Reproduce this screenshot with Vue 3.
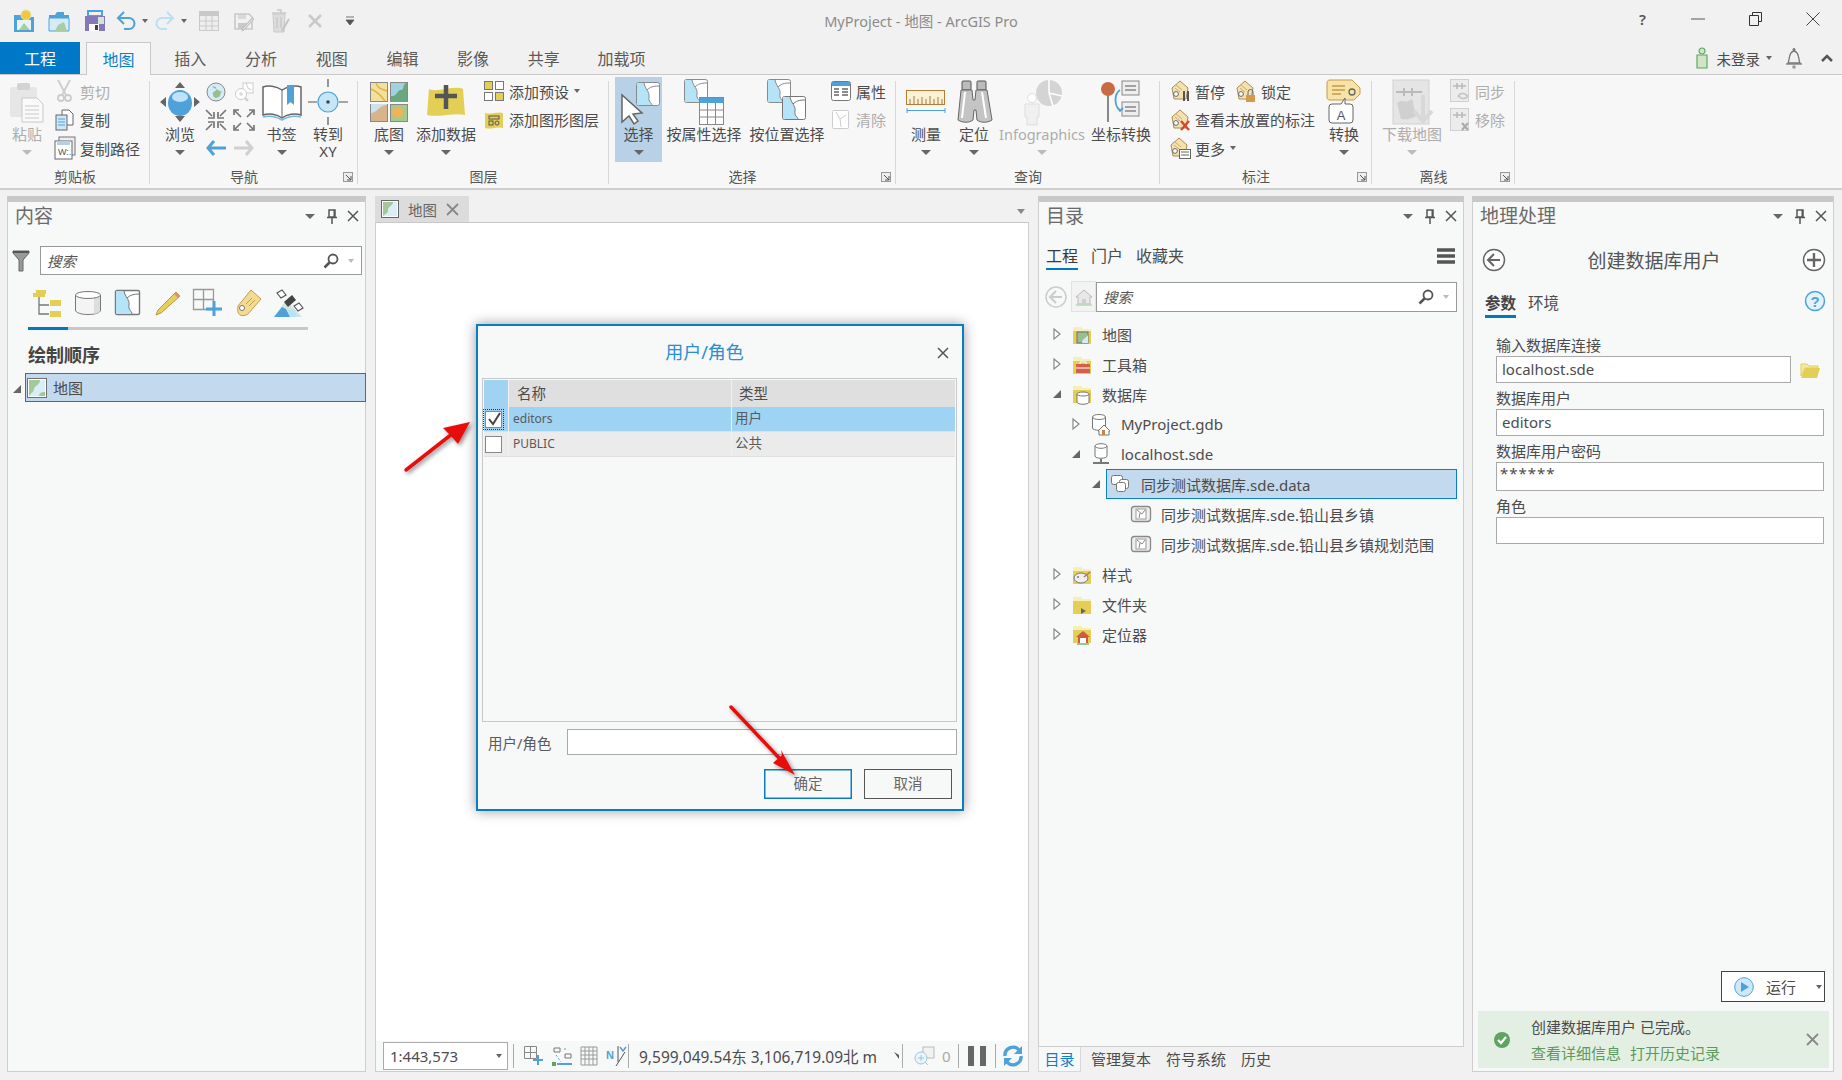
<script setup>
import { h } from 'vue'

const Y = '#e3cf55', B = '#4ea2d9', LB = '#b5e3f7', G = '#8a8a8a', D = '#c9c9c9'
const parcel = (c = G, f = LB) => `<rect x=".5" y=".5" width="23" height="23" rx="2" fill="#fff" stroke="${c}"/><path d="M1 1h7c1 6 6 9 5 14s3 6 3 8H2a1 1 0 0 1-1-1z" fill="${f}"/><path d="M8 1c1 6 6 9 5 14s3 6 3 8M11 8c3-3 6-4 12-4" fill="none" stroke="${c}"/>`
const folder = (inner) => `<path d="M1 3h7l2 2h9v15H1z" fill="${Y}"/><path d="M1 3h7l2 2h9v2H1z" fill="#f6efb8"/>${inner}`
const tagBase = (extra) => `<path d="M10 1l8 7-2 11H4L2 8z" fill="#f3e2b0" stroke="#a98d55"/><circle cx="6" cy="14" r="2.4" fill="#fff" stroke="#666"/><path d="M6 5l6 5M5 8l5 4" stroke="#c8ab6c"/>${extra}`
const disk = (c) => `<path d="M2 4h14l3 3v12H2z" fill="none" stroke="${c}" stroke-width="1.6"/><rect x="5" y="13" width="9" height="6" fill="${c}"/><rect x="5" y="4" width="8" height="5" fill="${c}" opacity=".6"/>`
const arrows4 = (c, out) => [[0,0,0],[12,0,90],[12,12,180],[0,12,270]].map(([x,y,r]) => `<g transform="translate(${x+4} ${y+4}) rotate(${r})"><path d="${out ? 'M3 3L-3 -3M-4 1v-5h5' : 'M-4 -4L2 2M4 -2v6h-6'}" fill="none" stroke="${c}" stroke-width="1.7"/></g>`).join('')

const I = {
  qNew: [24, 26, `<path d="M2 7h7l2 2h11v15H2z" fill="${B}"/><circle cx="14" cy="7" r="5" fill="#f0c83c" stroke="#e8e2a8"/><path d="M5 12h14v10H5z" fill="#e6f4fa"/><path d="M7 22l5-7 6 7z" fill="#a8cda0"/>`],
  qOpen: [24, 24, `<path d="M2 6h6l2-3h7v3h5v3H2z" fill="${B}"/><path d="M2 9h20v13H2z" fill="#d4ecf7" stroke="${B}"/><path d="M8 22l3-6 6-3 3 9z" fill="#a8cda0"/>`],
  qSave: [24, 24, `<path d="M5 2h14v5H5z" fill="none" stroke="${B}" stroke-width="2"/><path d="M2 7h20v15H2z" fill="#8578b8"/><rect x="6" y="15" width="10" height="7" fill="#fff"/><rect x="12" y="16" width="3" height="5" fill="#444"/><path d="M15 8h6v7h-6z" fill="#cfe6d0"/>`],
  qUndo: [20, 20, `<path d="M3 7h10a5.5 5.5 0 0 1 0 11H8" fill="none" stroke="${B}" stroke-width="2"/><path d="M8 1L2 7l6 6" fill="none" stroke="${B}" stroke-width="2"/>`],
  qRedo: [20, 20, `<path d="M17 7H7a5.5 5.5 0 0 0 0 11h5" fill="none" stroke="#bcdff2" stroke-width="2"/><path d="M12 1l6 6-6 6" fill="none" stroke="#bcdff2" stroke-width="2"/>`],
  qTable: [20, 20, `<rect x=".5" y=".5" width="19" height="19" fill="#eee" stroke="${D}"/><rect x="1" y="1" width="18" height="4" fill="${D}"/><path d="M7 5v14M13 5v14M1 10h18M1 15h18" stroke="${D}"/>`],
  qEdit: [22, 22, `${disk(D)}<path d="M21 9L11 20l-2 1 1-3 9-10z" fill="#ddd" stroke="#bbb"/>`],
  qDel: [20, 24, `<path d="M3 5h12l-1 18H4z" fill="#ddd" stroke="${D}"/><path d="M2 4h14M7 1h4v3M7 8v11M11 8v11" fill="none" stroke="${D}" stroke-width="1.5"/><path d="M19 10L12 22" stroke="#c4c4c4" stroke-width="2"/>`],
  qX: [14, 14, `<path d="M1 1l12 12M13 1L1 13" stroke="${D}" stroke-width="2.6"/>`],
  qMore: [10, 10, `<path d="M1 1h8M1 4h8l-4 5z" fill="#555" stroke="#555" stroke-width=".8"/>`],
  paste: [36, 40, `<rect x="1" y="5" width="27" height="30" rx="2" fill="#e6e6e6"/><rect x="8" y="1" width="13" height="7" rx="2" fill="#d3d3d3"/><path d="M13 16h15l6 6v18H13z" fill="#fafafa" stroke="${D}"/><path d="M16 24h14M16 28h14M16 32h14M16 36h14" stroke="${D}"/>`],
  cut: [20, 24, `<path d="M3 1l8 15M15 1L7 16" stroke="#ccc" stroke-width="1.8"/><circle cx="6" cy="19" r="3" fill="none" stroke="#ccc" stroke-width="1.8"/><circle cx="13" cy="19" r="3" fill="none" stroke="#ccc" stroke-width="1.8"/>`],
  copy: [20, 22, `<path d="M7 1h7l4 4v11H7z" fill="#fff" stroke="#666"/><rect x="1" y="6" width="11" height="15" fill="#cfe6f5" stroke="#666"/><path d="M3 10h7M3 13h7M3 16h7" stroke="${B}"/>`],
  copyPath: [22, 24, `<rect x="5" y="1" width="16" height="18" fill="#eee" stroke="#777"/><rect x="1" y="5" width="17" height="18" fill="#fff" stroke="#666"/><rect x="3" y="5" width="13" height="4" fill="#b5cfe4"/><text x="4" y="19" font-size="9" fill="#555" font-family="Liberation Sans">W:.</text>`],
  nav: [40, 40, `<path d="M20 0l5 6H15zM20 40l-5-6h10zM0 20l6-5v10zM40 20l-6 5V15z" fill="#666"/><ellipse cx="20" cy="21" rx="12" ry="13" fill="${B}"/><ellipse cx="20" cy="15" rx="8" ry="5" fill="#bfe2f6"/>`],
  globe: [20, 20, `<circle cx="10" cy="10" r="9" fill="#d4ecf7" stroke="#888"/><path d="M6 5c3-2 5 1 4 3s-4 1-3 5 4 3 6 2 1-5 3-5" fill="#98c08f"/>`],
  zoomData: [20, 20, `<rect x="9" y="1" width="10" height="10" fill="#fff" stroke="#ccc"/><path d="M12 1l2 5 3 2" fill="none" stroke="#ccc"/><circle cx="7" cy="12" r="5.5" fill="#fff" stroke="#ccc"/><path d="M5 12h4M7 10v4" stroke="#ccc"/><path d="M11 16l3 3" stroke="#ccc" stroke-width="2"/>`],
  zoomIn: [20, 20, arrows4('#777', false)],
  zoomOut: [20, 20, arrows4('#777', true)],
  back: [20, 16, `<path d="M8 1L2 8l6 7M2 8h18" fill="none" stroke="${B}" stroke-width="3"/>`],
  fwd: [20, 16, `<path d="M12 1l6 7-6 7M18 8H0" fill="none" stroke="#d0d0d0" stroke-width="3"/>`],
  book: [40, 36, `<path d="M20 6C14 2 6 1 1 3v28c6-2 14-1 19 3 5-4 13-5 19-3V3c-5-2-13-1-19 3z" fill="#fff" stroke="#666" stroke-width="1.5"/><path d="M20 6v28" stroke="#666"/><path d="M25 1h7v20l-3.5-3-3.5 3z" fill="${B}"/><path d="M1 33c7-2 14 0 19 3 5-3 12-5 19-3" fill="none" stroke="#76b7e4" stroke-width="1.5"/>`],
  goto: [40, 46, `<circle cx="20" cy="23" r="10" fill="#c5e6f7" stroke="${B}" stroke-width="1.2"/><circle cx="20" cy="23" r="1.8" fill="#444"/><path d="M20 0v8M20 38v8M0 23h9M31 23h9" stroke="#555" stroke-width="1.2"/>`],
  basemap: [38, 40, `<rect x=".5" y=".5" width="17" height="19" fill="#f3dfa0" stroke="#888"/><path d="M1 7c5 2 9 5 14 12M6 1c2 6 6 6 11 8" fill="none" stroke="#e3b23c" stroke-width="1.4"/><rect x="20.5" y=".5" width="17" height="19" fill="#9fd2dc" stroke="#888"/><path d="M21 14c6 1 6-6 10-6s1-7 6-7v19H21z" fill="#6aa67e"/><rect x=".5" y="22.5" width="17" height="17" fill="#d9b48b" stroke="#888"/><path d="M1 38V31c6 0 8-8 16-8v-1H1z" fill="#c9e4ef"/><rect x="20.5" y="22.5" width="17" height="17" fill="#a7c98c" stroke="#888"/><path d="M25 26c4-2 8 0 8 4s-4 7-8 5-4-7 0-9z" fill="#efb45a"/>`],
  addData: [38, 36, `<path d="M2 5c8 4 25-4 34 0l2 26c-10-3-26 3-38 0z" fill="${Y}"/><path d="M19 1v24M8 12h22" stroke="#555" stroke-width="4.5"/>`],
  preset: [20, 20, `<rect x=".5" y=".5" width="8" height="8" fill="${Y}" stroke="#777"/><rect x="11.5" y=".5" width="8" height="8" fill="#fff" stroke="#777"/><rect x=".5" y="11.5" width="8" height="8" fill="#fff" stroke="#777"/><rect x="11.5" y="11.5" width="8" height="8" fill="${Y}" stroke="#777"/>`],
  graphics: [20, 18, `<path d="M1 2c6 2 12-2 18 0v15c-6-2-12 2-18 0z" fill="${Y}"/><rect x="5" y="5" width="10" height="3" fill="none" stroke="#555"/><rect x="5" y="10" width="4" height="4" fill="none" stroke="#555"/><circle cx="13" cy="12" r="2" fill="none" stroke="#555"/>`],
  select: [44, 46, `<g transform="translate(19 3)">${parcel()}</g><path d="M5 16v27l7-6 5 8 4-3-5-7 9-1z" fill="#fff" stroke="#666" stroke-width="1.5"/>`],
  selAttr: [40, 46, `${parcel()}<rect x="15.5" y="18.5" width="24" height="27" fill="#fff" stroke="#888"/><rect x="16" y="19" width="23" height="5" fill="${B}"/><path d="M16 31h23M16 38h23M23.500 24v21M31.500 24v21" stroke="#888"/>`],
  selLoc: [40, 46, `${parcel()}<g transform="translate(15 17)">${parcel('#777', LB)}</g>`],
  attrs: [20, 20, `<rect x=".5" y=".5" width="19" height="19" rx="2" fill="#fff" stroke="#777"/><rect x="1" y="1" width="18" height="4" fill="${B}"/><path d="M3 8h5M11 8h6M3 11h5M11 11h6M3 14h5M11 14h6" stroke="#666" stroke-width="1.6"/>`],
  clear: [18, 20, `<rect x=".5" y=".5" width="16" height="18" rx="1" fill="#fff" stroke="#ccc"/><path d="M4 2l4 7 1 8M8 9l6-4" fill="none" stroke="#ccc"/>`],
  ruler: [40, 24, `<rect x=".5" y=".5" width="38" height="14" fill="#fbf2d6" stroke="#b27d37"/><path d="M4 14V9M8 14V6M12 14V9M16 14V7M20 14V9M24 14V6M28 14V9M32 14V7M36 14V9" stroke="#a07a45"/><path d="M1 18v5M39 18v5M1 20.500h38" stroke="${B}"/>`],
  binoc: [36, 44, `<rect x="6" y="1" width="9" height="9" rx="1" fill="#bbb" stroke="#555"/><rect x="21" y="1" width="9" height="9" rx="1" fill="#bbb" stroke="#555"/><path d="M5 10h11l1 10h2l1-10h11l5 30c-5 3-11 3-15 0l-1-10h-2l-1 10c-4 3-10 3-15 0z" fill="#c4c4c4" stroke="#666"/><path d="M9 12l-3 26M26 12l4 26" stroke="#fff" stroke-width="2"/>`],
  info: [42, 46, `<circle cx="28" cy="14" r="13" fill="#d4d4d4"/><path d="M28 14L28 1M28 14l13 3M28 14l4 13" stroke="#fff" stroke-width="1.5"/><circle cx="11" cy="19" r="4.5" fill="#fff" stroke="#ddd"/><path d="M4 25h14v13h-2v8H6v-8H4z" fill="#f0f0f0" stroke="#ddd"/>`],
  coord: [40, 44, `<path d="M7 10v32" stroke="#888" stroke-width="2"/><circle cx="7" cy="9" r="7" fill="#c96a45"/><rect x="21" y="1" width="17" height="14" fill="#eee" stroke="#888"/><path d="M24 6h11M24 10h11" stroke="#888" stroke-width="1.5"/><rect x="21" y="22" width="17" height="14" fill="#eee" stroke="#888"/><path d="M24 27h11M24 31h11" stroke="#888" stroke-width="1.5"/><path d="M19 10c-6 4-6 16 0 20M16 27l3 4 3-3" fill="none" stroke="${B}" stroke-width="1.8"/>`],
  tagPause: [20, 22, tagBase(`<path d="M14 11v10M18 11v10" stroke="#555" stroke-width="2"/>`)],
  tagX: [20, 22, tagBase(`<path d="M11 12l8 9M19 12l-8 9" stroke="#d24a2e" stroke-width="2.4"/>`)],
  tagMore: [22, 22, tagBase(`<rect x="10.500" y="12.500" width="11" height="9" fill="#fff" stroke="#666"/><path d="M12 15h8M12 18h8" stroke="#666"/>`)],
  tagLock: [22, 22, tagBase(`<rect x="11" y="15" width="9" height="7" fill="#d39b4a"/><path d="M13 15v-3a2.500 2.500 0 0 1 5 0v3" fill="none" stroke="#666"/>`)],
  convert: [36, 46, `<path d="M4 1h22l8 8v6l-6 6H4c-2 0-3-1-3-3V4c0-2 1-3 3-3z" fill="#f7e3a6" stroke="#c59b4e"/><path d="M6 7h13M6 11h13M6 15h9" stroke="#c59b4e" stroke-width="1.4"/><circle cx="26" cy="13" r="3" fill="none" stroke="#666" stroke-width="1.3"/><path d="M6 25h9l4-6v6h5a3 3 0 0 1 3 3v13a3 3 0 0 1-3 3H6a3 3 0 0 1-3-3V28a3 3 0 0 1 3-3z" fill="#fff" stroke="#666"/><text x="15" y="41" font-size="13" text-anchor="middle" fill="#555" font-family="Liberation Sans">A</text>`],
  download: [40, 46, `<rect x="1" y="1" width="36" height="44" fill="#e5e5e5" stroke="#d2d2d2"/><path d="M5 24c6-5 8 1 13-3s2 11 7 13-9 8-16 6z" fill="#d0d0d0"/><path d="M4 13h26M12 9v8M20 9v8" stroke="#bbb" stroke-width="2"/><path d="M31 16v26M22 32l9 10 9-10" fill="none" stroke="#d8d8d8" stroke-width="4"/>`],
  sync: [20, 24, `<rect x=".5" y=".5" width="18" height="22" fill="#ececec" stroke="#d0d0d0"/><path d="M3 7h13M7 4v6M12 4v6" stroke="#bbb" stroke-width="1.6"/><path d="M8 18c1-4 7-5 9-1M18 16c-1 4-7 5-9 1" fill="none" stroke="#c4c4c4" stroke-width="1.6"/>`],
  remove: [20, 24, `<rect x=".5" y=".5" width="18" height="22" fill="#ececec" stroke="#d0d0d0"/><path d="M3 7h13M7 4v6M12 4v6" stroke="#bbb" stroke-width="1.6"/><path d="M12 15l6 7M18 15l-6 7" stroke="#aaa" stroke-width="2"/>`],
  user: [14, 22, `<circle cx="7" cy="4" r="3" fill="#cfe5c6" stroke="#5fa862" stroke-width="1.2"/><path d="M2 8h10v13H2z" fill="#cfe5c6" stroke="#5fa862" stroke-width="1.2"/>`],
  bell: [18, 22, `<path d="M3 16c2-3 0-11 6-12 6 1 4 9 6 12z" fill="none" stroke="#777" stroke-width="1.3"/><path d="M1 17h16" stroke="#777" stroke-width="1.3"/><circle cx="9" cy="2.500" r="1.500" fill="#777"/><circle cx="9" cy="20" r="1.800" fill="#999"/>`],
  mapIc: [20, 20, `<rect x=".5" y=".5" width="19" height="19" fill="#fff" stroke="#6e6e6e"/><rect x="2" y="2" width="16" height="16" fill="#d9eef7"/><path d="M2 2h11c0 5-5 5-6 9s-2 3-5 7z" fill="#a4c89a"/><path d="M12 18c0-3 2-4 6-4v4z" fill="#a4c89a"/>`],
  funnel: [18, 22, `<path d="M1 1h16v2l-6 7v11H7V10L1 3z" fill="#999" stroke="#666"/><path d="M1 2h16" stroke="#555" stroke-width="2"/>`],
  mag: [16, 16, `<circle cx="10" cy="6" r="4.500" fill="none" stroke="#555" stroke-width="1.8"/><path d="M6.500 9.500L1.500 14.500" stroke="#555" stroke-width="2.6"/>`],
  tDraw: [30, 28, `<rect x="3" y="1" width="10" height="4" fill="${Y}"/><rect x="0" y="4" width="12" height="4" fill="${Y}"/><path d="M6 8v17h10M6 16h10" fill="none" stroke="#777" stroke-width="1.3"/><rect x="17" y="11" width="11" height="6" fill="${Y}"/><rect x="17" y="22" width="11" height="6" fill="${Y}"/>`],
  tDb: [28, 26, `<path d="M1.500 5v15c0 6 25 6 25 0V5" fill="#f4f4f4" stroke="#777"/><path d="M20 8v16c4-1 6-2 6-4V6z" fill="#ddd"/><ellipse cx="14" cy="5" rx="12.500" ry="3.500" fill="#fff" stroke="#777"/>`],
  tParcel: [26, 26, `<rect x=".5" y=".5" width="24" height="24" rx="1.500" fill="#fff" stroke="#777" stroke-width="1.4"/><path d="M1 1h8c1 6 6 9 5 14s3 6 3 9H2a1 1 0 0 1-1-1z" fill="${LB}"/><path d="M9 1c1 6 6 9 5 14s3 6 3 9M12 8c3-3 7-4 12-4" fill="none" stroke="#777"/>`],
  tPencil: [26, 26, `<path d="M21 2l4 4L6 23l-5 2 2-5z" fill="#e8cf5a" stroke="#b89a3a"/><path d="M21 2l4 4-2 2-4-4z" fill="#dc8f7c"/>`],
  tGrid: [30, 28, `<path d="M.5 .5h20v20H.5zM10.500 1v20M1 10.500h20" fill="none" stroke="#999" stroke-width="1.300"/><path d="M21 12v15M13 20h16" stroke="${B}" stroke-width="3"/>`],
  tTag: [28, 28, `<path d="M4 17L17 1l10 9-13 15c-3 2-9 3-10-2s0-4 0-6z" fill="#f3dc92" stroke="#c39c4f"/><circle cx="8" cy="19" r="2.500" fill="#fff" stroke="#777"/><path d="M12 15l6-6M15 17l6-6" stroke="#c39c4f"/>`],
  tSat: [30, 30, `<path d="M1 29l12-17 16 17z" fill="#cfe7dc"/><path d="M1 29l8-10 4 2 4 8z" fill="${B}"/><path d="M14 22l7-1 3 8H17z" fill="${LB}"/><path d="M4 5l5-3 4 5-5 3zM21 18l5-3 4 5-5 3z" fill="#fff" stroke="#555" stroke-width="1.200"/><path d="M11 14l8-7 4 5-8 7z" fill="#444"/>`],
  fMap: [20, 20, folder(`<rect x="5" y="8" width="11" height="11" fill="#98be92" stroke="#6e6e6e"/><path d="M10 19c0-4 3-4 6-8v8z" fill="#d2ebf6"/>`)],
  fTool: [20, 20, folder(`<rect x="4" y="10" width="14" height="9" fill="#d4604a"/><path d="M8 10V8h6v2M4 14h14" fill="none" stroke="#fff"/>`)],
  fDb: [20, 22, folder(`<path d="M5 11v8c0 3 12 3 12 0v-8" fill="#fff" stroke="#777"/><ellipse cx="11" cy="11" rx="6" ry="2" fill="#fff" stroke="#777"/>`)],
  fStyle: [20, 20, folder(`<ellipse cx="9" cy="14" rx="7" ry="5" fill="#eee" stroke="#777"/><circle cx="6" cy="13" r="1" fill="#777"/><path d="M12 13l6-5" stroke="#a77" stroke-width="1.500"/>`)],
  fPlain: [20, 20, folder(`<path d="M9 14v6l5-3z" fill="#666"/>`)],
  fLoc: [20, 22, folder(`<path d="M11 8l7 6h-2v6H6v-6H4z" fill="#d05a44"/><rect x="8" y="15" width="6" height="5" fill="#fff"/><path d="M5 21h12" stroke="#79b57a" stroke-width="1.500"/>`)],
  gdb: [20, 22, `<path d="M1.500 4v11c0 3 13 3 13 0V4" fill="#fff" stroke="#777"/><ellipse cx="8" cy="4" rx="6.500" ry="2.500" fill="#fff" stroke="#777"/><path d="M13 12l6 6h-1v4H8v-4H7z" fill="#fff" stroke="#777"/><rect x="11" y="17" width="3" height="5" fill="#c88545"/>`],
  sde: [18, 22, `<path d="M3 3v10c0 3 12 3 12 0V3" fill="#fff" stroke="#777"/><ellipse cx="9" cy="3" rx="6" ry="2.300" fill="#fff" stroke="#777"/><path d="M9 16v3M1 20h16" stroke="#777" stroke-width="2"/>`],
  dataset: [20, 18, `<rect x=".5" y=".5" width="11" height="9" rx="2" fill="#fff" stroke="#777"/><rect x="8.500" y="4.500" width="9" height="9" rx="2" fill="#fff" stroke="#777"/><rect x="5.500" y="7.500" width="9" height="9" rx="2" fill="#fff" stroke="#777"/>`],
  fc: [20, 16, `<rect x=".5" y=".5" width="19" height="15" rx="3" fill="#eee" stroke="#888" stroke-width="1.300"/><rect x="5" y="3" width="10" height="10" fill="#fff" stroke="#999"/><path d="M6 4l5 4 3-4M9 7l-1 5" fill="none" stroke="#888"/>`],
  home: [18, 18, `<path d="M9 2l8 7h-2v7H3V9H1z" fill="#e8e8e8" stroke="#bbb"/><rect x="7" y="11" width="4" height="5" fill="#cfcfcf"/><path d="M1 17h16" stroke="#b7d7b0" stroke-width="1.500"/>`],
  menu: [18, 16, `<path d="M0 2h18M0 8h18M0 14h18" stroke="#555" stroke-width="3.500"/>`],
  cBack: [22, 22, `<circle cx="11" cy="11" r="10" fill="none" stroke="#ccc" stroke-width="1.500"/><path d="M11 5l-6 6 6 6M5 11h12" fill="none" stroke="#ccc" stroke-width="2"/>`],
  gBack: [24, 24, `<circle cx="12" cy="12" r="10.500" fill="#fff" stroke="#666" stroke-width="1.500"/><path d="M12 6l-6 6 6 6M6 12h12" fill="none" stroke="#666" stroke-width="2"/>`],
  gPlus: [24, 24, `<circle cx="12" cy="12" r="10.500" fill="#fff" stroke="#666" stroke-width="1.500"/><path d="M12 5v14M5 12h14" stroke="#666" stroke-width="2.400"/>`],
  help: [22, 22, `<circle cx="11" cy="11" r="9.500" fill="#e4f3fb" stroke="${B}" stroke-width="1.500"/><text x="11" y="16.500" text-anchor="middle" font-size="15" font-weight="700" fill="${B}" font-family="Liberation Sans">?</text>`],
  gFolder: [20, 16, `<path d="M1 2h6l2 2h9v2H5L1 14z" fill="#f3e9a8" stroke="${Y}"/><path d="M5 6h15l-3 10H1z" fill="${Y}"/>`],
  play: [20, 20, `<circle cx="10" cy="10" r="9.300" fill="#cfe8f7" stroke="${B}"/><path d="M7 5l8 5-8 5z" fill="${B}"/>`],
  ok: [16, 16, `<circle cx="8" cy="8" r="8" fill="#5fa362"/><path d="M4 8l3 3 5-6" fill="none" stroke="#fff" stroke-width="2.200"/>`],
  x12: [12, 12, `<path d="M1 1l10 10M11 1L1 11" stroke="#555" stroke-width="1.500"/>`],
  x12g: [13, 13, `<path d="M1 1l11 11M12 1L1 12" stroke="#888" stroke-width="1.800"/>`],
  pin: [12, 15, `<path d="M3 1h6v7H3zM1 8.500h10M6 9v6" fill="none" stroke="#555" stroke-width="1.500"/><path d="M7.500 1h1.500v7H7.500z" fill="#555"/>`],
  launcher: [10, 10, `<rect x=".5" y=".5" width="9" height="9" fill="#eee" stroke="#999"/><path d="M3 3l5 5M8 4v4H4" fill="none" stroke="#555"/>`],
  sGrid: [20, 20, `<path d="M.5 .5h12v12H.5zM6.500 1v12M1 6.500h12" fill="none" stroke="#888"/><path d="M14 9v10M9 14h10" stroke="${B}" stroke-width="2"/>`],
  sSnap: [20, 20, `<path d="M2 2h6v4H2zM13 8h6v4h-6z" fill="none" stroke="#777"/><path d="M4 9l5 7M13 2v4" stroke="${B}" stroke-dasharray="2 2"/><rect x="0" y="16" width="4" height="4" fill="#5fa362"/><path d="M5 18h15" stroke="${B}" stroke-width="2"/>`],
  sTable: [18, 20, `<path d="M1 1h16v18H1zM1 5h16M1 9h16M1 13h16M5 1v18M9 1v18M13 1v18" fill="none" stroke="#999"/>`],
  sNorth: [22, 20, `<text x="0" y="13" font-size="11" font-weight="700" fill="${B}" font-family="Liberation Sans">N</text><path d="M10 20L19 6M12 0v16" fill="none" stroke="#555"/><path d="M14 1l3 4 3-4" fill="none" stroke="${B}" stroke-width="1.500"/>`],
  sZoom: [22, 20, `<rect x="10" y="1" width="11" height="11" fill="#f2f2f2" stroke="#bbb"/><circle cx="8" cy="12" r="6" fill="#e9f5fb" stroke="#9cc6de"/><path d="M5 12h6M8 9v6M12 16l3 3" stroke="#9cc6de"/>`],
  refresh: [20, 22, `<path d="M2 11a8 8 0 0 1 14-6M18 11a8 8 0 0 1-14 6" fill="none" stroke="${B}" stroke-width="3.400"/><path d="M19 1v8h-8zM1 21v-8h8z" fill="${B}"/>`],
  chk: [14, 14, `<path d="M2 7l4 5 7-11" fill="none" stroke="#444" stroke-width="2"/>`],
  tabMap: [18, 18, `<rect x=".5" y=".5" width="17" height="17" fill="#fff" stroke="#666"/><rect x="2" y="2" width="14" height="14" fill="#d9eef7"/><path d="M2 2h10c0 4-5 4-5 8s-2 3-5 6z" fill="#a4c89a"/>`],
  expO: [8, 12, `<path d="M1 1l6 5-6 5z" fill="#fff" stroke="#888" stroke-width="1.200"/>`]
}

const Ico = (p) => {
  const [w, hh, m] = I[p.n]
  return h('svg', { class: 'ico', width: w, height: hh, viewBox: `0 0 ${w} ${hh}`, innerHTML: m })
}
Ico.props = ['n']

const qat = [
  { n: 'qNew', w: 35 }, { n: 'qOpen', w: 36 }, { n: 'qSave', w: 33 },
  { n: 'qUndo', w: 39, c: 1 }, { n: 'qRedo', w: 44, c: 1 }, { n: 'qTable', w: 34 },
  { n: 'qEdit', w: 37 }, { n: 'qDel', w: 38 }, { n: 'qX', w: 37 }, { n: 'qMore', w: 10 }
]
const tabs = ['插入', '分析', '视图', '编辑', '影像', '共享', '加载项']

const groups = [
  { label: '剪贴板', w: 150, pad: 0, items: [
    { w: 54, ic: 'paste', label: '粘贴', dis: 1, caret: 1 },
    { w: 96, rows: [[{ ic: 'cut', label: '剪切', dis: 1 }], [{ ic: 'copy', label: '复制' }], [{ ic: 'copyPath', label: '复制路径' }]] }
  ] },
  { label: '导航', w: 208, pad: 8, launch: 1, items: [
    { w: 44, ic: 'nav', label: '浏览', caret: 1 },
    { w: 57, grid: 1 },
    { w: 45, ic: 'book', label: '书签', caret: 1 },
    { w: 48, ic: 'goto', label: '转到', sub: 'XY' }
  ] },
  { label: '图层', w: 251, pad: 6, items: [
    { w: 50, ic: 'basemap', label: '底图', caret: 1 },
    { w: 64, ic: 'addData', label: '添加数据', caret: 1 },
    { w: 125, ml: 5, rows: [[{ ic: 'preset', label: '添加预设', caret: 1 }], [{ ic: 'graphics', label: '添加图形图层' }]] }
  ] },
  { label: '选择', w: 287, pad: 6, launch: 1, items: [
    { w: 47, ic: 'select', label: '选择', caret: 1, on: 1 },
    { w: 84, ic: 'selAttr', label: '按属性选择' },
    { w: 82, ic: 'selLoc', label: '按位置选择' },
    { w: 60, ml: 2, rows: [[{ ic: 'attrs', label: '属性' }], [{ ic: 'clear', label: '清除', dis: 1 }]] }
  ] },
  { label: '查询', w: 264, pad: 6, items: [
    { w: 48, ic: 'ruler', label: '测量', caret: 1 },
    { w: 48, ic: 'binoc', label: '定位', caret: 1 },
    { w: 88, ic: 'info', label: 'Infographics', dis: 1, caret: 1, tiny: 1 },
    { w: 70, ic: 'coord', label: '坐标转换' }
  ] },
  { label: '标注', w: 212, pad: 9, launch: 1, items: [
    { w: 151, rows: [[{ ic: 'tagPause', label: '暂停', w: 66 }, { ic: 'tagLock', label: '锁定' }], [{ ic: 'tagX', label: '查看未放置的标注' }], [{ ic: 'tagMore', label: '更多', caret: 1 }]] },
    { w: 48, ic: 'convert', label: '转换', caret: 1 }
  ] },
  { label: '离线', w: 143, pad: 6, launch: 1, items: [
    { w: 68, ic: 'download', label: '下载地图', dis: 1, caret: 1 },
    { w: 60, ml: 3, rows: [[{ ic: 'sync', label: '同步', dis: 1 }], [{ ic: 'remove', label: '移除', dis: 1 }]] }
  ] }
]
const leftTabs = ['tDraw', 'tDb', 'tParcel', 'tPencil', 'tGrid', 'tTag', 'tSat']
const tree = [
  { pad: 11, exp: 'o', ic: 'fMap', t: '地图' },
  { pad: 11, exp: 'o', ic: 'fTool', t: '工具箱' },
  { pad: 11, exp: 'x', ic: 'fDb', t: '数据库' },
  { pad: 30, exp: 'o', ic: 'gdb', t: 'MyProject.gdb' },
  { pad: 30, exp: 'x', ic: 'sde', t: 'localhost.sde' },
  { pad: 50, exp: 'x', ic: 'dataset', t: '同步测试数据库.sde.data', sel: 1 },
  { pad: 70, exp: '', ic: 'fc', t: '同步测试数据库.sde.铅山县乡镇' },
  { pad: 70, exp: '', ic: 'fc', t: '同步测试数据库.sde.铅山县乡镇规划范围' },
  { pad: 11, exp: 'o', ic: 'fStyle', t: '样式' },
  { pad: 11, exp: 'o', ic: 'fPlain', t: '文件夹' },
  { pad: 11, exp: 'o', ic: 'fLoc', t: '定位器' }
]
const fields = [
  { l: '输入数据库连接', v: 'localhost.sde', folder: 1, top: 6, hh: 27 },
  { l: '数据库用户', v: 'editors', top: 5, hh: 27 },
  { l: '数据库用户密码', v: '******', pw: 1, top: 5, hh: 29 },
  { l: '角色', v: '', top: 5, hh: 27 }
]
</script>

<template>
  <div class="app">
    <header class="titlebar">
      <div class="qat">
        <div v-for="q in qat" :key="q.n" class="qitem" :style="{ width: q.w + 'px' }">
          <Ico :n="q.n" /><i v-if="q.c" class="caret qcaret"></i>
        </div>
      </div>
      <div class="title">MyProject - 地图 - ArcGIS Pro</div>
      <div class="winbtns">
        <span class="wq">?</span>
        <span class="wbtn"><svg width="14" height="2"><path d="M0 1h14" stroke="#555" /></svg></span>
        <span class="wbtn"><svg width="13" height="14"><path d="M3.500 3V.5h9v9H10M.5 3.500h9v10h-9z" fill="none" stroke="#333" /></svg></span>
        <span class="wbtn"><svg width="14" height="14"><path d="M.5 .5l13 13M13.500 .5l-13 13" stroke="#444" /></svg></span>
      </div>
    </header>

    <nav class="tabbar">
      <div class="tab-file">工程</div>
      <div class="tab-on">地图</div>
      <div v-for="t in tabs" :key="t" class="tab">{{ t }}</div>
      <div class="account">
        <Ico n="user" /><span class="acct">未登录</span><i class="caret small"></i>
        <span class="bell"><Ico n="bell" /></span>
        <svg class="chev" width="12" height="8"><path d="M1 7l5-5 5 5" fill="none" stroke="#555" stroke-width="2.500" /></svg>
      </div>
    </nav>

    <section class="ribbon">
      <div v-for="g in groups" :key="g.label" class="rgroup" :style="{ width: g.w + 'px' }">
        <div class="rbody" :style="{ paddingLeft: g.pad + 'px' }">
          <template v-for="(it, i) in g.items" :key="i">
            <div v-if="it.grid" class="navgrid" :style="{ width: it.w + 'px' }">
              <Ico n="globe" /><Ico n="zoomData" />
              <Ico n="zoomIn" /><Ico n="zoomOut" />
              <Ico n="back" /><Ico n="fwd" />
            </div>
            <div v-else-if="it.rows" class="smcol" :style="{ width: it.w + 'px', marginLeft: (it.ml || 0) + 'px' }">
              <div v-for="(r, j) in it.rows" :key="j" class="smrow">
                <div v-for="s in r" :key="s.label" class="sm" :class="{ dis: s.dis }" :style="{ width: s.w ? s.w + 'px' : 'auto' }">
                  <span class="smic"><Ico :n="s.ic" /></span><span>{{ s.label }}</span><i v-if="s.caret" class="caret small mlc"></i>
                </div>
              </div>
            </div>
            <div v-else class="lg" :class="{ dis: it.dis, on: it.on }" :style="{ width: it.w + 'px' }">
              <span class="lgic"><Ico :n="it.ic" /></span>
              <span class="lgtxt" :class="{ tiny: it.tiny }">{{ it.label }}</span>
              <span v-if="it.sub" class="lgsub">{{ it.sub }}</span>
              <span v-else-if="it.caret" class="lgcaret"><i class="caret" :class="{ light: it.dis }"></i></span>
            </div>
          </template>
        </div>
        <div class="rlabel" :class="{ haslaunch: g.launch }">{{ g.label }}</div>
        <span v-if="g.launch" class="launch"><Ico n="launcher" /></span>
      </div>
    </section>

    <main class="panes">
      <aside class="panel left">
        <div class="phead"><span class="ptitle">内容</span><i class="caret pc"></i><Ico n="pin" /><Ico n="x12" /></div>
        <div class="lsearch">
          <Ico n="funnel" />
          <div class="search"><span>搜索</span><Ico n="mag" /><i class="caret light small"></i></div>
        </div>
        <div class="ltabs"><span v-for="t in leftTabs" :key="t"><Ico :n="t" /></span></div>
        <div class="lbar"><i></i></div>
        <h3 class="lhead">绘制顺序</h3>
        <div class="lrow">
          <i class="tri-x"></i>
          <div class="lsel"><Ico n="mapIc" /><span>地图</span></div>
        </div>
      </aside>

      <section class="mapcol">
        <div class="mapstrip">
          <div class="maptab"><Ico n="tabMap" /><span>地图</span><Ico n="x12g" /></div>
          <i class="caret stripc"></i>
        </div>
        <div class="mapview"></div>
        <div class="status">
          <div class="scale"><span>1:443,573</span><i class="caret small"></i></div>
          <b class="sep"></b>
          <Ico n="sGrid" /><Ico n="sSnap" /><Ico n="sTable" /><Ico n="sNorth" />
          <b class="sep"></b>
          <span class="coord">9,599,049.54东 3,106,719.09北 m</span>
          <svg class="coordc" width="6" height="8"><path d="M0 0l5 3v4z" fill="#555" /></svg>
          <b class="sep"></b>
          <Ico n="sZoom" /><span class="zero">0</span>
          <b class="sep"></b>
          <span class="pause"><i></i><i></i></span>
          <b class="sep"></b>
          <Ico n="refresh" />
        </div>
      </section>

      <section class="catcol">
        <div class="panel cat">
          <div class="phead"><span class="ptitle">目录</span><i class="caret pc"></i><Ico n="pin" /><Ico n="x12" /></div>
          <div class="ctabs">
            <span class="ctab on">工程</span><span class="ctab">门户</span><span class="ctab">收藏夹</span>
            <span class="cmenu"><Ico n="menu" /></span>
          </div>
          <div class="csearch">
            <Ico n="cBack" />
            <span class="chome"><Ico n="home" /></span>
            <div class="search"><span>搜索</span><Ico n="mag" /><i class="caret light small"></i></div>
          </div>
          <div class="tree">
            <div v-for="r in tree" :key="r.t" class="trow" :style="{ paddingLeft: r.pad + 'px' }">
              <span class="exp"><Ico v-if="r.exp === 'o'" n="expO" /><i v-else-if="r.exp === 'x'" class="tri-x"></i></span>
              <div class="tn" :class="{ sel: r.sel }"><span class="tnic"><Ico :n="r.ic" /></span><span>{{ r.t }}</span></div>
            </div>
          </div>
        </div>
        <div class="btabs">
          <span class="btab on">目录</span><span class="btab">管理复本</span><span class="btab">符号系统</span><span class="btab">历史</span>
        </div>
      </section>

      <aside class="panel gp">
        <div class="phead"><span class="ptitle">地理处理</span><i class="caret pc"></i><Ico n="pin" /><Ico n="x12" /></div>
        <div class="gptop"><Ico n="gBack" /><span>创建数据库用户</span><Ico n="gPlus" /></div>
        <div class="gptabs">
          <span class="gptab on">参数</span><span class="gptab">环境</span>
          <span class="gphelp"><Ico n="help" /></span>
        </div>
        <div class="form">
          <div v-for="f in fields" :key="f.l" class="field">
            <label :style="{ marginTop: f.top + 'px' }">{{ f.l }}</label>
            <div class="frow">
              <div class="inp" :class="{ pw: f.pw }" :style="{ height: f.hh + 'px' }">{{ f.v }}</div>
              <span v-if="f.folder" class="inpfolder"><Ico n="gFolder" /></span>
            </div>
          </div>
        </div>
        <div class="gpfoot">
          <div class="runbtn"><Ico n="play" /><span>运行</span><i class="caret small"></i></div>
          <div class="msg">
            <Ico n="ok" />
            <div class="msgtxt">
              <div>创建数据库用户 已完成。</div>
              <div class="msglinks"><span>查看详细信息</span><span>打开历史记录</span></div>
            </div>
            <Ico n="x12g" />
          </div>
        </div>
      </aside>
    </main>

    <div class="dialog">
      <div class="dhead"><span>用户/角色</span><Ico n="x12" /></div>
      <div class="dtable">
        <div class="dth"><span class="c0"></span><span class="c1">名称</span><span class="c2">类型</span></div>
        <div class="dtr active">
          <span class="c0"><span class="cb focus"><Ico n="chk" /></span></span><span class="c1">editors</span><span class="c2">用户</span>
        </div>
        <div class="dtr">
          <span class="c0"><span class="cb"></span></span><span class="c1">PUBLIC</span><span class="c2">公共</span>
        </div>
      </div>
      <div class="dinput"><span>用户/角色</span><div class="dbox"></div></div>
      <div class="dbtns"><button class="btn prim">确定</button><button class="btn">取消</button></div>
    </div>

    <svg class="arrows" width="1842" height="1080" viewBox="0 0 1842 1080">
      <defs>
        <filter id="sh" x="-30%" y="-30%" width="160%" height="160%"><feDropShadow dx="2" dy="2" stdDeviation="2" flood-color="#000" flood-opacity=".45" /></filter>
      </defs>
      <g filter="url(#sh)">
        <path d="M406 470L452 434" stroke="#e81010" stroke-width="3.500" stroke-linecap="round" />
        <path d="M470 422L458 444L451 436L443 428z" fill="#e81010" />
        <path d="M731 707L781 760" stroke="#e81010" stroke-width="3.500" stroke-linecap="round" />
        <path d="M795 775L773 763L782 755L781 750z" fill="#e81010" />
      </g>
    </svg>
  </div>
</template>

<style>
html, body { margin: 0; background: #f1f1f1; }
.ico { display: block; flex: none; overflow: visible; }
</style>

<style scoped>
.app {
  position: relative; width: 1842px; height: 1080px; overflow: hidden; background: #f1f1f1; color: #4c4c4c;
  font-family: "Noto Sans", "Noto Sans CJK SC", sans-serif; font-size: 15px;
}
i { font-style: normal; display: block; }
.caret { width: 0; height: 0; border-left: 5px solid transparent; border-right: 5px solid transparent; border-top: 5px solid #666; }
.caret.small { border-left-width: 3.5px; border-right-width: 3.5px; border-top-width: 4px; }
.caret.light { border-top-color: #bbb; }

.titlebar { display: flex; align-items: center; height: 42px; position: relative; }
.qat { display: flex; align-items: center; padding-left: 12px; }
.qitem { display: flex; align-items: center; gap: 4px; flex: none; }
.qcaret { border-left-width: 3.5px; border-right-width: 3.5px; border-top-width: 4px; margin-left: 2px; }
.title { position: absolute; left: 0; right: 0; text-align: center; font-size: 14.5px; line-height: 37px; color: #8c8c8c; }
.winbtns { margin-left: auto; display: flex; align-items: center; padding-bottom: 4px; position: relative; }
.wq { width: 40px; text-align: center; font-size: 15px; font-weight: 600; color: #555; margin-right: 7px; }
.wbtn { width: 57.500px; height: 30px; display: flex; align-items: center; justify-content: center; }

.tabbar { display: flex; align-items: flex-end; height: 32px; border-bottom: 1px solid #c8c8c8; }
.tab-file { width: 80px; height: 32px; background: #0078c8; color: #fff; font-size: 16px; line-height: 35px; text-align: center; }
.tab-on {
  width: 65px; height: 33px; margin: 0 4px -1px 6px; background: #f7f7f7; color: #0f7ec8; font-size: 16px; line-height: 35px; text-align: center;
  border: 1px solid #c8c8c8; border-bottom: 0; box-sizing: border-box;
}
.tab { width: 70.700px; height: 32px; font-size: 16px; line-height: 35px; text-align: center; color: #5a5a5a; flex: none; }
.tab:nth-last-child(2) { width: 85px; }
.account { margin-left: auto; display: flex; align-items: center; height: 32px; padding-right: 9px; }
.acct { font-size: 14.500px; margin-left: 8px; margin-right: 6px; }
.bell { margin-left: 13px; }
.chev { margin-left: 18px; }

.ribbon { display: flex; height: 113px; background: #f7f7f7; border-bottom: 2px solid #cfcfcf; }
.rgroup { flex: none; box-sizing: border-box; position: relative; display: flex; flex-direction: column; }
.rgroup::after { content: ""; position: absolute; right: 0; top: 6px; bottom: 4px; width: 1px; background: #d8d8d8; }
.rbody { display: flex; height: 90px; padding-top: 2px; box-sizing: border-box; }
.rlabel { text-align: center; font-size: 14px; line-height: 20px; height: 20px; margin-top: 2px; color: #555; }
.rlabel.haslaunch { padding-right: 20px; }
.launch { position: absolute; right: 5px; bottom: 6px; }
.lg { flex: none; display: flex; flex-direction: column; align-items: center; height: 85px; box-sizing: border-box; }
.lg.on { background: #b9d1e6; }
.lgic { height: 47px; display: flex; align-items: center; justify-content: center; margin-top: 1px; }
.lgtxt { line-height: 19px; white-space: nowrap; font-size: 15px; }
.lgtxt.tiny { font-size: 14.500px; }
.lg.dis .lgtxt, .sm.dis { color: #adadad; }
.lgsub { line-height: 15px; height: 15px; font-size: 15px; }
.lgcaret { height: 17px; display: flex; align-items: center; }
.navgrid { flex: none; display: grid; grid-template-columns: 28px 28px; grid-template-rows: 26px 30px 26px; justify-items: center; align-items: center; align-content: start; padding-top: 2px; }
.smcol { flex: none; display: flex; flex-direction: column; }
.smrow { display: flex; height: 28.500px; align-items: center; white-space: nowrap; }
.sm { display: flex; align-items: center; font-size: 15px; flex: none; }
.smic { width: 22px; margin-right: 4px; display: flex; justify-content: center; flex: none; }
.mlc { margin-left: 5px; }

.panes { display: flex; height: 876px; margin-top: 6px; padding-left: 7px; gap: 9px; }
.panel { box-sizing: border-box; border: 1px solid #cecece; border-top: 6px solid #c8c8c8; background: #f7f8f8; flex: none; }
.left { width: 359px; position: relative; }
.gp { width: 362px; margin-left: -1px; display: flex; flex-direction: column; }
.phead { display: flex; align-items: center; height: 28px; padding: 0 6px 0 7px; gap: 9px; }
.ptitle { flex: 1; font-size: 19px; line-height: 28px; color: #6a6a6a; }
.pc { margin-right: 2px; }

.search { flex: 1; display: flex; align-items: center; height: 29px; box-sizing: border-box; border: 1px solid #999; background: #fff; padding: 0 7px 0 6px; font-style: italic; font-size: 14.500px; color: #555; }
.search span { flex: 1; }
.search .caret { margin-left: 9px; }
.lsearch { display: flex; align-items: center; gap: 10px; margin-top: 16px; padding: 0 3px 0 4px; }
.ltabs { display: flex; margin-top: 13px; padding-left: 20px; }
.ltabs span { width: 40px; height: 30px; display: flex; align-items: center; justify-content: center; }
.lbar { height: 3px; width: 280px; margin: 9px 0 0 20px; background: #c8c8c8; }
.lbar i { width: 40px; height: 3px; background: #0079c1; }
.lhead { margin: 13px 0 0 20px; font-size: 18px; line-height: 25px; font-weight: 700; color: #444; }
.lrow { display: flex; align-items: center; margin-top: 5px; padding-left: 5px; }
.lrow .tri-x { margin-right: 4px; margin-top: 2px; }
.lsel { flex: 1; height: 29px; box-sizing: border-box; border: 1px solid #0a7fc4; background: #c3d9ee; display: flex; align-items: center; gap: 6px; padding-left: 1px; margin-right: -1px; font-size: 15px; }
.tri-x { width: 0; height: 0; border-bottom: 8px solid #666; border-left: 8px solid transparent; }

.mapcol { width: 654px; flex: none; display: flex; flex-direction: column; }
.mapstrip { height: 27px; display: flex; position: relative; border-bottom: 1px solid #c8c8c8; box-sizing: border-box; }
.maptab { width: 94px; background: #dcdcdc; display: flex; align-items: center; gap: 9px; padding: 0 8px 0 6px; box-sizing: border-box; color: #666; font-size: 14.500px; }
.stripc { position: absolute; right: 4px; top: 13px; border-top-color: #888; border-left-width: 4px; border-right-width: 4px; }
.mapview { flex: 1; background: #fff; border-left: 1px solid #cecece; border-right: 1px solid #cecece; }
.status { height: 31px; box-sizing: border-box; display: flex; align-items: center; background: #f7f8f8; border: 1px solid #cecece; border-top: 0; padding-left: 7px; }
.scale { width: 125px; height: 28px; box-sizing: border-box; border: 1px solid #aaa; background: #fff; display: flex; align-items: center; justify-content: space-between; padding: 0 5px 0 6px; font-size: 15px; margin-right: 5px; }
.sep { width: 1px; height: 24px; background: #aaa; display: block; flex: none; }
.status > .ico { margin-left: 10px; }
.status > .ico + .ico { margin-left: 8px; }
.status > .ico:last-child { margin-left: 7px; }
.coord { margin-left: 10px; width: 247px; font-size: 15.500px; white-space: nowrap; overflow: hidden; }
.coordc { margin: 0 2px 0 8px; flex: none; }
.zero { color: #aaa; font-size: 15px; margin: 0 7px 0 7px; width: 9px; }
.pause { display: flex; gap: 6px; margin: 0 9px 0 9px; }
.pause i { width: 6px; height: 20px; background: #666; }

.catcol { width: 426px; flex: none; display: flex; flex-direction: column; }
.cat { height: 851px; flex: none; }
.ctabs { display: flex; align-items: flex-start; margin-top: 13px; padding-left: 7px; gap: 13px; }
.ctab { height: 27px; line-height: 26px; font-size: 16px; box-sizing: border-box; }
.ctab.on { border-bottom: 2px solid #0079c1; color: #3a3a3a; }
.cmenu { margin-left: auto; margin-right: 8px; padding-top: 5px; }
.csearch { display: flex; align-items: center; margin-top: 11px; padding: 0 6px 0 6px; }
.chome { width: 25px; height: 31px; box-sizing: border-box; border: 1px solid #e2e2e2; display: flex; align-items: center; justify-content: center; margin-left: 4px; background: #f3f3f3; }
.csearch .search { height: 30px; }
.tree { margin-top: 7px; font-size: 15px; }
.trow { display: flex; height: 30px; align-items: center; }
.exp { width: 14px; margin-right: 3px; display: flex; justify-content: center; flex: none; }
.tn { flex: 1; display: flex; align-items: center; height: 30px; box-sizing: border-box; padding-left: 4px; margin-right: 6px; border: 1px solid transparent; white-space: nowrap; }
.tn.sel { background: #c3d9ee; border-color: #0a7fc4; }
.tnic { width: 20px; margin-right: 10px; display: flex; justify-content: center; flex: none; }
.btabs { display: flex; height: 25px; font-size: 15px; line-height: 24px; }
.btab { margin-left: 15px; }
.btab.on { width: 43px; margin: 0 -5px 0 0; text-align: center; background: #f7f8f8; color: #0f7ec8; border: 1px solid #d8d8d8; border-top: 0; box-sizing: border-box; }

.gptop { display: flex; align-items: center; justify-content: space-between; height: 28px; margin-top: 16px; padding: 0 7px 0 9px; font-size: 19px; color: #555; }
.gptabs { display: flex; align-items: flex-start; gap: 12px; padding-left: 12px; margin-top: 16px; position: relative; }
.gptab { height: 28px; line-height: 26px; font-size: 15.500px; box-sizing: border-box; }
.gptab.on { font-weight: 700; border-bottom: 3px solid #0079c1; height: 28px; color: #444; }
.gphelp { margin-left: auto; margin-right: 7px; }
.form { padding: 11px 9px 0 23px; font-size: 15px; }
label { display: block; line-height: 21px; height: 21px; }
.frow { display: flex; align-items: center; gap: 9px; }
.inp { flex: 1; box-sizing: border-box; border: 1px solid #aaa; background: #fff; padding: 0 5px; line-height: 25px; font-size: 15px; }
.inp.pw { line-height: 21px; padding: 0 3px; letter-spacing: 1px; }
.inpfolder { margin-right: 4px; }
.gpfoot { margin-top: auto; }
.runbtn { width: 104px; height: 31px; box-sizing: border-box; border: 1px solid #444; background: #fff; display: flex; align-items: center; margin-left: 248px; padding-left: 12px; gap: 12px; }
.runbtn .caret { margin-left: 8px; }
.msg { display: flex; align-items: center; height: 57px; margin: 9px 4px 3px 5px; background: #e4efe3; padding: 0 10px 0 16px; }
.msg > .ico:first-child { margin-right: 21px; }
.msgtxt { flex: 1; font-size: 15px; line-height: 26px; }
.msglinks { display: flex; gap: 9px; color: #5c9a60; }

.dialog {
  position: absolute; left: 476px; top: 324px; width: 488px; height: 487px; box-sizing: border-box;
  border: 2px solid #0a7cc0; background: #f7f8f8; box-shadow: 0 0 12px rgba(0, 0, 0, .4); padding: 0 5px 0 4px;
}
.dhead { height: 52px; display: flex; align-items: center; justify-content: center; position: relative; color: #2a8ed2; font-size: 18px; padding-bottom: 2px; box-sizing: border-box; }
.dhead span { margin-right: 30px; }
.dhead .ico { position: absolute; right: 8px; top: 21px; }
.dtable { height: 344px; box-sizing: border-box; border: 1px solid #c8c8c8; font-size: 14px; }
.dth, .dtr { display: flex; }
.dth { height: 27px; background: #dfdfdf; line-height: 27px; margin: 1px 1px 0; font-size: 14.500px; }
.dth .c0 { background: #a0d3f2; }
.dth .c1 { padding-left: 8px; border-right: 1px solid #f0f0f0; font-size: 14.500px; }
.dth .c2 { padding-left: 7px; font-size: 14.500px; }
.dtr { height: 25px; margin: 0 1px; line-height: 23px; background: #ebebeb; border-bottom: 1px solid #e0e0e0; color: #5a5a5a; box-sizing: border-box; }
.dtr.active { background: #9fd3f3; }
.c0 { width: 24px; flex: none; display: flex; align-items: center; padding-left: 1px; box-sizing: border-box; }
.c1 { width: 224px; flex: none; box-sizing: border-box; padding-left: 4px; border-left: 1px solid #f0f0f0; border-right: 1px solid #f0f0f0; font-size: 12px; }
.c2 { flex: 1; padding-left: 3px; font-size: 13.500px; }
.cb { width: 17px; height: 17px; box-sizing: border-box; border: 1px solid #888; background: #fff; display: flex; align-items: center; justify-content: center; }
.cb.focus { outline: 1px dotted #333; outline-offset: 1px; }
.dinput { display: flex; align-items: center; margin-top: 7px; font-size: 14.500px; color: #5a5a5a; padding-left: 6px; }
.dinput span { width: 79px; flex: none; }
.dbox { flex: 1; height: 26px; box-sizing: border-box; border: 1px solid #aaa; background: #fff; }
.dbtns { display: flex; justify-content: flex-end; gap: 12px; margin-top: 14px; padding-right: 5px; }
.btn { width: 88px; height: 30px; box-sizing: border-box; border: 1px solid #555; background: #f7f8f8; font: inherit; font-size: 14.500px; color: #666; padding: 0 0 3px; }
.btn.prim { border: 1px solid #0a7cc0; box-shadow: inset 0 0 0 .5px #0a7cc0; }
.arrows { position: absolute; left: 0; top: 0; pointer-events: none; }
</style>
